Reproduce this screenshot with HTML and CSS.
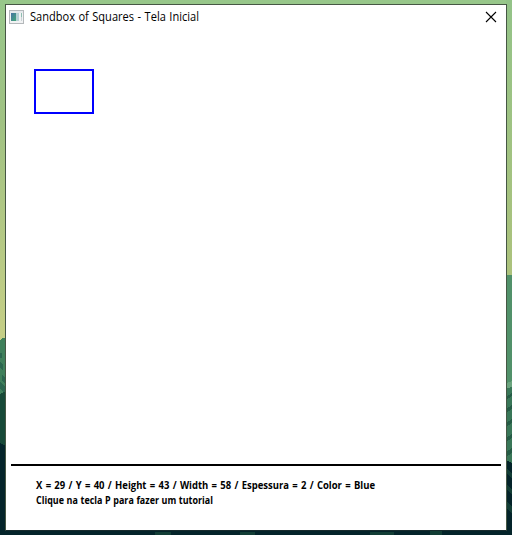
FILE: index.html
```html
<!DOCTYPE html>
<html lang="pt">
<head>
<meta charset="utf-8">
<title>Sandbox of Squares - Tela Inicial</title>
<link rel="stylesheet" href="styles.css">
</head>
<body>
<svg class="wallpaper" width="512" height="535" viewBox="0 0 512 535" shape-rendering="crispEdges">
  <defs><linearGradient id="sky" x1="0" y1="0" x2="0" y2="1"><stop offset="0" stop-color="#97c78a"/><stop offset=".35" stop-color="#a0c283"/><stop offset="1" stop-color="#c6cf86"/></linearGradient>
  <linearGradient id="skyRight" x1="0" y1="0" x2="0" y2="1"><stop offset="0" stop-color="#93c388"/><stop offset="1" stop-color="#acc27c"/></linearGradient></defs>
  <path fill="url(#sky)" d="M0 0h506v340H0z"/>
  <path fill="url(#skyRight)" d="M506 0h6v275h-6z"/>
  <path fill="#3f805b" d="M0 340l3-2 3-1v58H0z"/>
  <path fill="#2c6750" d="M0 353h2v5H0zM0 362l3 3v6l-3-3zM2 374l4 5v6l-4-4zM0 381l5 6v6l-5-4z"/>
  <path fill="#174938" d="M0 394l6-3v55H0z"/>
  <path fill="#04242a" d="M0 443l6 3v89H0zM0 530h512v5H0z"/>
  <path fill="#51916a" d="M506 275h6v110h-6z"/>
  <path fill="#6ba47e" d="M507 383l5-2v10l-5-2z"/>
  <path fill="#397758" d="M506 389l6-2v76h-6z"/>
  <path fill="#255c46" d="M506 397l6-4v3l-6 4zM506 409l6-4v4l-6 4zM506 423l6-4v4l-6 4zM506 438l6-4v4l-6 4zM506 452l6-4v5l-6 4z"/>
  <path fill="#04242a" d="M506 460l6 3v72h-6z"/>
  <path fill="#123d35" d="M507 469l5 4v5l-5-4zM507 485l5 4v5l-5-4zM507 502l5 4v7l-5-4zM155 532h16v3h-16zM240 532h15v3h-15zM370 532h24v3h-24zM430 531h12v4h-12z"/>
</svg>
<main class="window">
  <header class="titlebar">
    <svg class="app-icon" width="15" height="14" viewBox="0 0 15 14" shape-rendering="crispEdges">
      <defs><linearGradient id="pane" x1="0" y1="0" x2="1" y2="1"><stop offset="0" stop-color="#4872a4"/><stop offset="1" stop-color="#43a878"/></linearGradient></defs>
      <path fill="#b4b8bb" d="M0 0h15v14H0z"/><path fill="#e5e8eb" d="M1 1h13v2H1z"/><path fill="#f1f2f3" d="M1 3h13v10H1z"/>
      <path fill="url(#pane)" d="M2 3h5v8H2z"/><path fill="#b5d0d4" d="M7 3h3v8H7z"/><path fill="#8cbdb0" d="M12 3h1v4h-1z"/><path fill="#c9d2d5" d="M12 7h1v4h-1z"/>
    </svg>
    <h1 class="title"><svg class="title-text" width="172" height="22"><text x="0" y="15" textLength="169" lengthAdjust="spacingAndGlyphs">Sandbox of Squares - Tela Inicial</text></svg></h1>
    <svg class="close" width="10" height="10" viewBox="0 0 10 10"><path d="M0 0l10 10M10 0L0 10" stroke="#000" stroke-width="1.1"/></svg>
  </header>
  <section class="canvas"><div class="square"></div></section>
  <footer class="status">
    <svg class="info" width="345" height="32">
      <text class="values" x="0" y="11" textLength="339" lengthAdjust="spacingAndGlyphs">X = 29 / Y = 40 / Height = 43 / Width = 58 / Espessura = 2 / Color = Blue</text>
      <text class="hint" x="0" y="26" textLength="177" lengthAdjust="spacingAndGlyphs">Clique na tecla P para fazer um tutorial</text>
    </svg>
  </footer>
</main>
</body>
</html>
```
FILE: styles.css
```css
* { box-sizing: border-box; }
body {
  margin: 0;
  width: 512px;
  height: 535px;
  overflow: hidden;
  padding: 4px 5px;
  font-family: "Open Sans", "Noto Sans", sans-serif;
}
.wallpaper { position: absolute; inset: 0; z-index: -1; }
.window {
  display: flex;
  flex-direction: column;
  width: 502px;
  height: 527px;
  background: #fff;
  border: 1px solid #465744;
  border-bottom-color: #172b2d;
}
.titlebar {
  display: flex;
  align-items: flex-start;
  height: 31px;
  padding: 5px 10px 0 3px;
}
.app-icon { margin-right: 6px; }
.title { margin: -4px 0 0; font-size: 12px; font-weight: 400; }
.title-text { display: block; overflow: visible; font-size: 12px; word-spacing: 0.7px; }
.close { margin: 2px 0 0 auto; overflow: visible; }
.canvas { height: 428px; padding: 33px 28px; }
.square { width: 60px; height: 45px; border: 2px solid #00f; }
.status {
  margin: 0 5px;
  padding: 12px 25px 0;
  border-top: 2px solid #000;
}
.info { display: block; overflow: visible; font-size: 10px; font-weight: 700; }
.values { word-spacing: 0.9px; }
.hint { word-spacing: 0.3px; }
```
